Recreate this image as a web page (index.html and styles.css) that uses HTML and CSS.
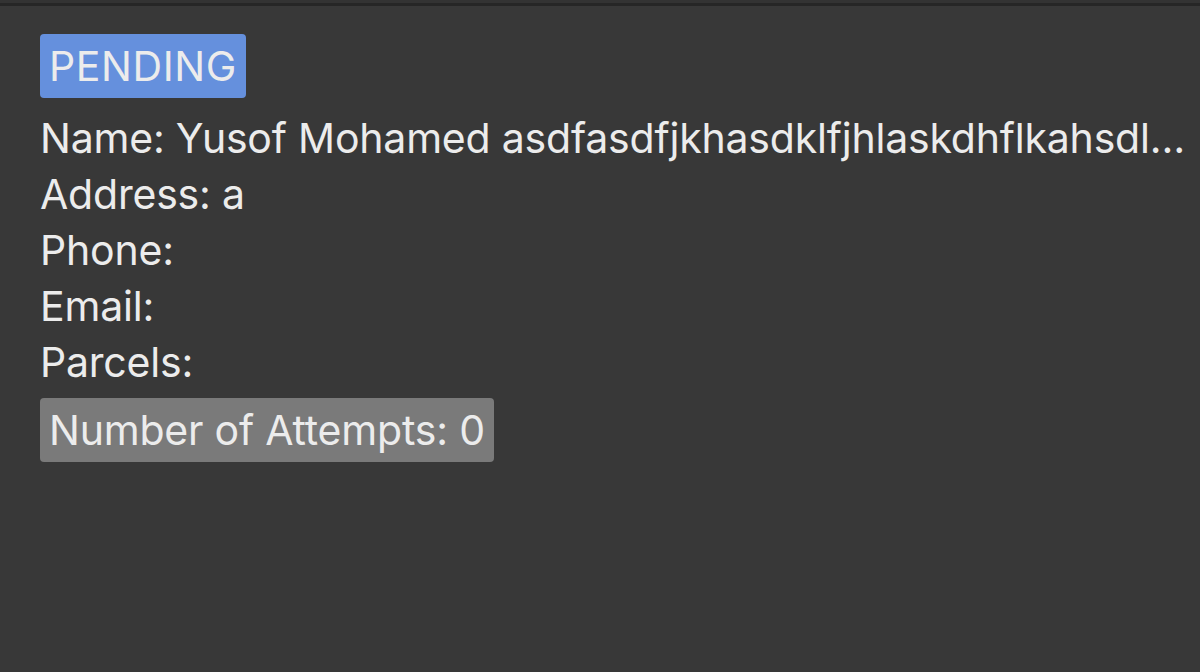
FILE: index.html
```html
<!DOCTYPE html>
<html>
<head>
<meta charset="utf-8">
<link rel="stylesheet" href="styles.css">
</head>
<body>
<div class="topbar"></div>
<div class="card">
  <div class="badge badge-pending">PENDING</div>
  <div class="details">
    <div class="line">Name: Yusof Mohamed asdfasdfjkhasdklfjhlaskdhflkahsdl…</div>
    <div class="line">Address: a</div>
    <div class="line">Phone:</div>
    <div class="line">Email:</div>
    <div class="line">Parcels:</div>
  </div>
  <div class="badge badge-attempts">Number of Attempts: 0</div>
</div>
</body>
</html>
```
FILE: styles.css
```css
html, body {
  margin: 0;
  padding: 0;
  background: #383838;
  height: 100%;
}
body {
  font-family: Inter, "Noto Sans", sans-serif;
  color: #ececec;
  overflow: hidden;
}
.topbar {
  height: 3px;
  background: #333333;
  border-bottom: 3px solid #262626;
}
.card {
  display: flex;
  flex-direction: column;
  align-items: flex-start;
  padding: 28px 10px 0 40px;
}
.badge {
  font-size: 41px;
  line-height: 56px;
  padding: 4px 9px;
  border-radius: 4px;
  letter-spacing: -0.2px;
}
.badge-pending {
  background: #6590dd;
  letter-spacing: 0.6px;
}
.badge-attempts {
  background: #7a7a7a;
  margin-top: 8px;
}
.details {
  margin-top: 12px;
}
.line {
  font-size: 41px;
  line-height: 56px;
  white-space: nowrap;
  letter-spacing: -0.2px;
}
```
